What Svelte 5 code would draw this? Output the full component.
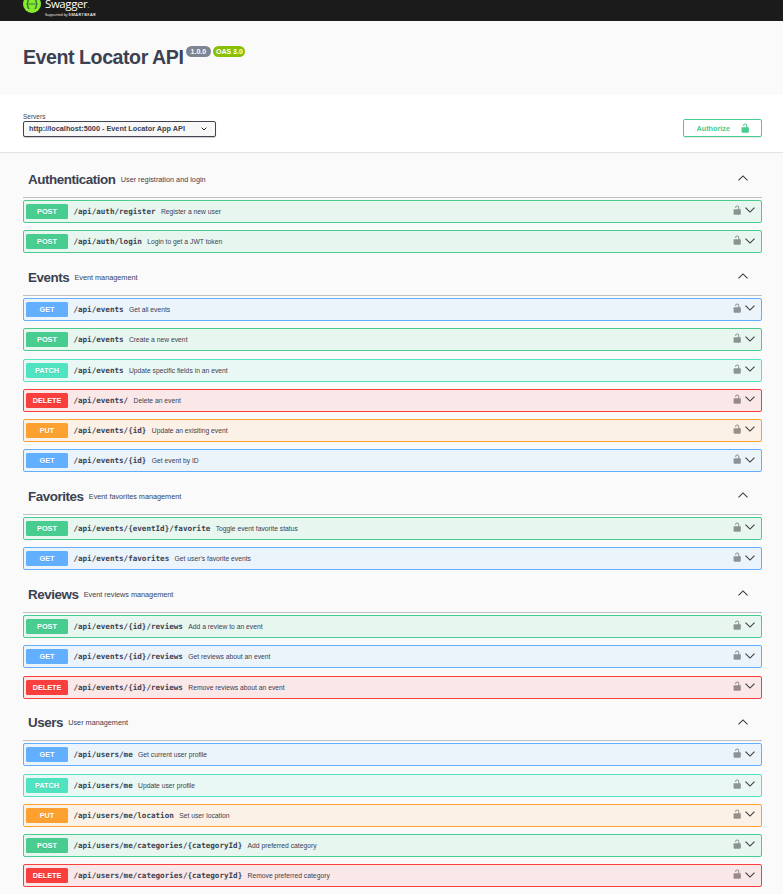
<script>
  const lock =
    'M15.8 8H14V5.6C14 2.703 12.665 1 10 1 7.334 1 6 2.703 6 5.6V6h2v-.801C8 3.754 8.797 3 10 3c1.203 0 2 .754 2 2.199V8H4c-.553 0-1 .646-1 1.199V17c0 .549.428 1.139.951 1.307l1.197.387C5.672 18.861 6.55 19 7.1 19h5.8c.549 0 1.428-.139 1.951-.307l1.196-.387c.524-.167.953-.757.953-1.306V9.199C17 8.646 16.352 8 15.8 8z';

  const sections = [
    {
      name: 'Authentication',
      about: 'User registration and login',
      ops: [
        ['post', '/api/auth/register', 'Register a new user'],
        ['post', '/api/auth/login', 'Login to get a JWT token'],
      ],
    },
    {
      name: 'Events',
      about: 'Event management',
      ops: [
        ['get', '/api/events', 'Get all events'],
        ['post', '/api/events', 'Create a new event'],
        ['patch', '/api/events', 'Update specific fields in an event'],
        ['delete', '/api/events/', 'Delete an event'],
        ['put', '/api/events/{id}', 'Update an exisiting event'],
        ['get', '/api/events/{id}', 'Get event by ID'],
      ],
    },
    {
      name: 'Favorites',
      about: 'Event favorites management',
      ops: [
        ['post', '/api/events/{eventId}/favorite', 'Toggle event favorite status'],
        ['get', '/api/events/favorites', "Get user's favorite events"],
      ],
    },
    {
      name: 'Reviews',
      about: 'Event reviews management',
      ops: [
        ['post', '/api/events/{id}/reviews', 'Add a review to an event'],
        ['get', '/api/events/{id}/reviews', 'Get reviews about an event'],
        ['delete', '/api/events/{id}/reviews', 'Remove reviews about an event'],
      ],
    },
    {
      name: 'Users',
      about: 'User management',
      ops: [
        ['get', '/api/users/me', 'Get current user profile'],
        ['patch', '/api/users/me', 'Update user profile'],
        ['put', '/api/users/me/location', 'Set user location'],
        ['post', '/api/users/me/categories/{categoryId}', 'Add preferred category'],
        ['delete', '/api/users/me/categories/{categoryId}', 'Remove preferred category'],
      ],
    },
  ];
</script>

<div class="page">
  <header class="topbar">
    <svg class="mark" width="18" height="18" viewBox="0 0 18 18">
      <circle cx="9" cy="9" r="9" fill="#85ea2d" />
      <g fill="none" stroke="#173647" stroke-width="1">
        <path d="M6.4 4.6H5.9Q4.9 4.6 4.9 5.7V7.6Q4.9 9 3.7 9Q4.9 9 4.9 10.4V12.3Q4.9 13.4 5.9 13.4H6.4" />
        <path d="M11.6 4.6H12.1Q13.1 4.6 13.1 5.7V7.6Q13.1 9 14.3 9Q13.1 9 13.1 10.4V12.3Q13.1 13.4 12.1 13.4H11.6" />
      </g>
      <g fill="#173647"><circle cx="6.9" cy="9" r=".65" /><circle cx="9" cy="9" r=".65" /><circle cx="11.1" cy="9" r=".65" /></g>
    </svg>
    <div class="brand">
      <span class="word">Swagger<i>.</i></span>
      <span class="support">Supported by <b>SMARTBEAR</b></span>
    </div>
  </header>

  <section class="info">
    <h1>Event Locator API</h1>
    <span class="pill version">1.0.0</span>
    <span class="pill oas">OAS 3.0</span>
  </section>

  <section class="schemes">
    <div class="servers">
      <span class="label">Servers</span>
      <div class="select">
        <span>http://localhost:5000 - Event Locator App API</span>
        <svg width="6" height="4" viewBox="0 0 6 4"><path d="M.7 .7L3 3L5.3 .7" fill="none" stroke="#222" stroke-width="1" /></svg>
      </div>
    </div>
    <button class="authorize">
      <span>Authorize</span>
      <svg width="10.4" height="10.4" viewBox="0 0 20 20"><path d={lock} fill="#49cc90" /></svg>
    </button>
  </section>

  <main>
    {#each sections as s}
      <section>
        <div class="tag">
          <h2>{s.name}</h2>
          <small>{s.about}</small>
          <svg class="up" width="10" height="6" viewBox="0 0 10 6"><path d="M.5 5.3L5 .9L9.5 5.3" /></svg>
        </div>
        {#each s.ops as [method, path, text]}
          <div class="op {method}">
            <span class="method">{method.toUpperCase()}</span>
            <span class="path">{path}</span>
            <span class="text">{text}</span>
            <svg class="lock" width="10.4" height="10.4" viewBox="0 0 20 20"><path d={lock} /></svg>
            <svg class="down" width="10" height="6" viewBox="0 0 10 6"><path d="M.5 .7L5 5.1L9.5 .7" /></svg>
          </div>
        {/each}
      </section>
    {/each}
  </main>
</div>

<style>
  :global(body) { margin: 0; background: #fafafa; }
  .page {
    height: 894px;
    overflow: hidden;
    background: #fafafa;
    color: #3b4151;
    font-family: "Liberation Sans", Arial, sans-serif;
  }
  h1, h2 { margin: 0; font-weight: 700; }
  svg { display: block; flex: none; }
  span, small, h1, h2 { white-space: nowrap; }

  .topbar { display: flex; height: 21px; padding-left: 23px; background: #1b1b1b; overflow: hidden; }
  .mark { margin-top: -5px; }
  .brand { display: flex; flex-direction: column; padding-left: 4px; color: #fff; }
  .word { font: 11.4px/8px "Open Sans", sans-serif; letter-spacing: -.35px; }
  .word i { font-size: 6px; font-style: normal; }
  .support { margin-top: 3px; font: 3.6px/4px "Open Sans", sans-serif; }
  .support b { font-size: 4px; font-weight: 600; letter-spacing: .45px; }

  .info { display: flex; height: 74px; padding-left: 23px; box-sizing: border-box; }
  h1 { margin-top: 25px; font-size: 19.6px; line-height: 22px; letter-spacing: -.45px; }
  .pill {
    height: 11px;
    margin: 25px 0 0 2.5px;
    border-radius: 6px;
    color: #fff;
    font-size: 7px;
    font-weight: 700;
    line-height: 11px;
    text-align: center;
  }
  .version { width: 25px; background: #7d8492; }
  .oas { width: 32px; background: #89bf04; }

  .schemes {
    display: flex;
    justify-content: space-between;
    box-sizing: border-box;
    height: 58px;
    padding: 0 21px 0 23px;
    border-bottom: 1px solid #e3e3e3;
    background: #fff;
  }
  .servers { display: flex; flex-direction: column; padding-top: 18px; }
  .label { margin-bottom: 1px; font-size: 6.5px; line-height: 7px; }
  .select {
    display: flex;
    align-items: center;
    justify-content: space-between;
    box-sizing: border-box;
    width: 193px;
    height: 16px;
    padding: 0 8px 1px 5px;
    border: 1px solid #41444e;
    border-radius: 2px;
    background: #f7f7f7;
    box-shadow: 0 1px 1px rgba(0, 0, 0, .2);
    font-size: 7.3px;
    font-weight: 700;
  }
  .authorize {
    display: flex;
    align-items: center;
    justify-content: space-between;
    box-sizing: border-box;
    width: 79px;
    height: 18px;
    margin-top: 24px;
    padding: 0 11px 0 12.5px;
    border: 1px solid #49cc90;
    border-radius: 2px;
    background: #fff;
    box-shadow: 0 1px 1px rgba(0, 0, 0, .1);
    color: #49cc90;
    font: 700 7.28px "Liberation Sans", Arial, sans-serif;
  }

  main { padding: 9.5px 21px 0 23px; }
  .tag {
    display: flex;
    align-items: center;
    box-sizing: border-box;
    height: 35px;
    margin-bottom: 2.5px;
    padding: 0 14px 0 5px;
    border-bottom: 1px solid #bfc0c4;
  }
  h2 { font-size: 13.4px; line-height: 16px; letter-spacing: -.44px; }
  small { margin-left: 5.2px; font-size: 7.28px; }
  .up { margin: -2.5px 0 0 auto; }
  .up path, .down path { fill: none; stroke: #3a3a3a; stroke-width: 1.1; }

  .op {
    display: flex;
    align-items: center;
    box-sizing: border-box;
    height: 23px;
    margin-bottom: 7.25px;
    padding: 0 6px 0 2px;
    border: 1px solid var(--c);
    border-radius: 2px;
    background: var(--bg);
  }
  .method {
    width: 42px;
    height: 15px;
    border-radius: 1.5px;
    background: var(--c);
    color: #fff;
    font-size: 7.28px;
    font-weight: 700;
    line-height: 15px;
    text-align: center;
    text-shadow: 0 1px 0 rgba(0, 0, 0, .1);
  }
  .path { margin-left: 5.4px; font: 700 7.58px "DejaVu Sans Mono", monospace; }
  .text { margin-left: 5.4px; font-size: 6.76px; }
  .lock { margin: -2.5px 2.8px 0 auto; }
  .lock path { fill: #000; opacity: .4; }
  .down { margin-top: -2.5px; }

  .get { --c: #61affe; --bg: #ebf3fb; }
  .post { --c: #49cc90; --bg: #e8f6f0; }
  .patch { --c: #50e3c2; --bg: #e9f8f5; }
  .delete { --c: #f93e3e; --bg: #fae7e7; }
  .put { --c: #fca130; --bg: #fbf1e6; }
</style>
